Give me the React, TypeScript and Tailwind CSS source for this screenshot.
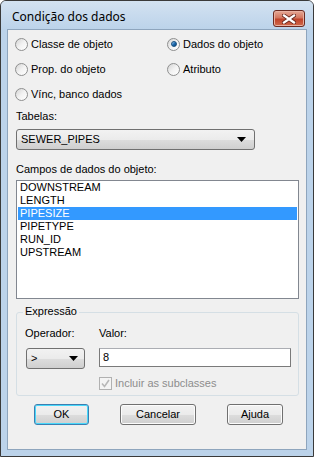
import React from "react";

const font = { fontFamily: '"Liberation Sans", Arial, sans-serif' };

function Radio({ checked, label }: { checked?: boolean; label: string }) {
  return (
    <div className="flex items-center gap-[3px] h-[16px]">
      <div className="w-[13px] h-[13px] rounded-full border border-[#8e8f8f] bg-gradient-to-br from-[#d4d4d4] via-[#f2f2f2] to-[#ffffff] flex items-center justify-center">
        {checked && (
          <div className="w-[6px] h-[6px] rounded-full bg-gradient-to-br from-[#a3d2f5] via-[#1f6fb4] to-[#0d3f76] border border-[#18507f]" />
        )}
      </div>
      <span className="text-[11px] text-black leading-none">{label}</span>
    </div>
  );
}

function Arrow() {
  return (
    <svg width="9" height="5" viewBox="0 0 9 5">
      <path d="M0 0 H9 L4.5 5 Z" fill="#000" />
    </svg>
  );
}

function Button({ label, def, w }: { label: string; def?: boolean; w: string }) {
  return (
    <div
      className={`${w} h-[21px] rounded-[3px] border ${
        def ? "border-[#3c7fb1] shadow-[inset_0_0_0_1px_#48d8fb]" : "border-[#707070] shadow-[inset_0_0_0_1px_#fcfcfc]"
      } bg-[linear-gradient(#f2f2f2_0%,#ebebeb_50%,#dddddd_51%,#cfcfcf_100%)] flex items-center justify-center text-[11px] text-black`}
    >
      {label}
    </div>
  );
}

export default function App() {
  const fields = ["DOWNSTREAM", "LENGTH", "PIPESIZE", "PIPETYPE", "RUN_ID", "UPSTREAM"];
  return (
    <div className="w-[314px] h-[457px] bg-white" style={font}>
      <div className="w-[314px] h-[457px] flex flex-col border border-[#3a3a3a] rounded-t-[6px] bg-[#bcd3ea] overflow-hidden">
        {/* title bar */}
        <div className="h-[28px] flex items-start justify-between pl-[11px] pr-[8px] bg-[linear-gradient(#d3e2f1,#bcd3ea)]">
          <span
            className="text-[12px] text-black mt-[10px] leading-none"
            style={{ fontFamily: '"Noto Sans", "Open Sans", sans-serif' }}
          >
            Condição dos dados
          </span>
          <div className="mt-[9px] w-[32px] h-[17px] rounded-[3px] border border-[#6b2a20] bg-[linear-gradient(#e6a895,#d3765f_45%,#c0432a_55%,#cf6a4c)] flex items-center justify-center shadow-[inset_0_0_0_1px_#e8b0a0]">
            <svg width="14" height="10" viewBox="0 0 14 10">
              <path d="M2 1.5 L12 8.5 M12 1.5 L2 8.5" stroke="#6a2a20" strokeWidth="4" strokeLinecap="square" />
              <path d="M2 1.5 L12 8.5 M12 1.5 L2 8.5" stroke="#ffffff" strokeWidth="2.2" strokeLinecap="square" />
            </svg>
          </div>
        </div>
        {/* client area */}
        <div className="flex-1 px-[6px] pb-[6px]">
          <div className="w-full h-full border border-[#8ea5bd] bg-[#f0f0f0] flex flex-col">
            {/* radios */}
            <div className="grid grid-cols-[152px_1fr] gap-y-[9px] pl-[7px] pt-[6px]">
              <Radio label="Classe de objeto" />
              <Radio checked label="Dados do objeto" />
              <Radio label="Prop. do objeto" />
              <Radio label="Atributo" />
              <Radio label="Vínc, banco dados" />
            </div>
            <div className="pl-[8px] mt-[9px] text-[11px] text-black leading-none">Tabelas:</div>
            <div className="ml-[8px] mt-[7px] w-[239px] h-[21px] rounded-[3px] border border-[#707070] bg-[linear-gradient(#f2f2f2_0%,#ebebeb_50%,#dddddd_51%,#cfcfcf_100%)] flex items-center justify-between pl-[4px] pr-[8px] text-[11px] text-black">
              <span>SEWER_PIPES</span>
              <Arrow />
            </div>
            <div className="pl-[8px] mt-[14px] text-[11px] text-black leading-none">Campos de dados do objeto:</div>
            <div className="ml-[8px] mt-[5px] w-[283px] h-[119px] border border-[#828790] bg-white px-[1px]">
              {fields.map((f) => (
                <div
                  key={f}
                  className={`h-[13px] leading-[13px] text-[11px] pl-[2px] ${
                    f === "PIPESIZE" ? "bg-[#3399ff] text-white" : "text-black"
                  }`}
                >
                  {f}
                </div>
              ))}
            </div>
            {/* group box */}
            <div className="relative ml-[8px] mt-[13px] w-[283px] h-[84px] border border-[#d5dfe5] rounded-[3px]">
              <span className="absolute left-[6px] top-[-7px] bg-[#f0f0f0] px-[2px] text-[11px] leading-none text-black">
                Expressão
              </span>
              <div className="flex pl-[8px] pt-[15px]">
                <div className="flex flex-col">
                  <span className="text-[11px] leading-none text-black">Operador:</span>
                  <div className="ml-[1px] mt-[9px] w-[59px] h-[21px] rounded-[3px] border border-[#707070] bg-[linear-gradient(#f2f2f2_0%,#ebebeb_50%,#dddddd_51%,#cfcfcf_100%)] flex items-center justify-between pl-[4px] pr-[6px] text-[11px] text-black">
                    <span>&gt;</span>
                    <Arrow />
                  </div>
                </div>
                <div className="flex flex-col ml-[14px]">
                  <span className="text-[11px] leading-none text-black">Valor:</span>
                  <div className="mt-[9px] w-[192px] h-[19px] border border-[#7a7a7a] border-t-[#abadb3] bg-white flex items-center pl-[3px] text-[11px] text-black">
                    8
                  </div>
                  <div className="mt-[10px] flex items-center gap-[3px]">
                    <div className="w-[13px] h-[13px] border border-[#b1b1b1] bg-[#f4f4f4] flex items-center justify-center">
                      <svg width="9" height="9" viewBox="0 0 9 9">
                        <path d="M1 4.5 L3.5 7.5 L8 1" stroke="#b8b8b8" strokeWidth="1.6" fill="none" />
                      </svg>
                    </div>
                    <span className="text-[11px] leading-none text-[#8d8d8d]">Incluir as subclasses</span>
                  </div>
                </div>
              </div>
            </div>
            {/* buttons */}
            <div className="flex mt-[8px] pl-[26px]">
              <Button def label="OK" w="w-[55px]" />
              <div className="ml-[31px]"><Button label="Cancelar" w="w-[76px]" /></div>
              <div className="ml-[31px]"><Button label="Ajuda" w="w-[56px]" /></div>
            </div>
          </div>
        </div>
      </div>
    </div>
  );
}
